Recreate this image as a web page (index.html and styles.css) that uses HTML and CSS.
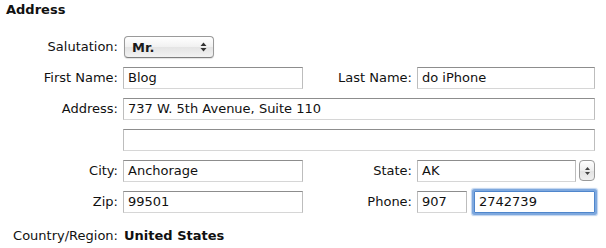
FILE: index.html
```html
<!DOCTYPE html>
<html>
<head>
  <title>Address</title>
  <meta name="viewport" content="width=device-width, initial-scale=1.0">
  <link rel="stylesheet" href="styles.css">
</head>
<body>
  <div class="panel">
    <h1>Address</h1>
    <div class="form">
      <label>Salutation:</label>
      <div class="popup">
        <span>Mr.</span>
        <svg width="7" height="10" viewBox="0 0 7 10"><path d="M3.5 0.5 L6.5 4 L0.5 4 Z M3.5 9.5 L6.5 6 L0.5 6 Z" fill="#333"/></svg>
      </div>
      <div></div>
      <div></div>

      <label>First Name:</label>
      <div class="field">Blog</div>
      <label>Last Name:</label>
      <div class="field">do iPhone</div>

      <label>Address:</label>
      <div class="field wide">737 W. 5th Avenue, Suite 110</div>

      <label></label>
      <div class="field wide"></div>

      <label>City:</label>
      <div class="field">Anchorage</div>
      <label>State:</label>
      <div class="combo">
        <div class="field">AK</div>
        <div class="stepper">
          <svg width="7" height="10" viewBox="0 0 7 10"><path d="M3.5 1 L6 4 L1 4 Z M3.5 9 L6 6 L1 6 Z" fill="#444"/></svg>
        </div>
      </div>

      <label>Zip:</label>
      <div class="field">99501</div>
      <label>Phone:</label>
      <div class="phone">
        <div class="field area">907</div>
        <div class="field focused">2742739</div>
      </div>

      <label class="country">Country/Region:</label>
      <div class="country value">United States</div>
    </div>
  </div>
</body>
</html>
```

FILE: styles.css
```css
body {
  margin: 0;
  background-color: #fff;
  font-family: "DejaVu Sans", sans-serif;
  font-size: 13px;
  color: #111;
}
.panel {
  width: 606px;
  height: 248px;
  overflow: hidden;
}
h1 {
  font-size: 13px;
  font-weight: bold;
  margin: 0;
  padding: 2px 0 0 6px;
  line-height: 16px;
  height: 18px;
}
.form {
  display: grid;
  grid-template-columns: 118px 180px 104px 178px;
  grid-auto-rows: 22px;
  column-gap: 5px;
  row-gap: 9px;
  margin-top: 16px;
}
label {
  text-align: right;
  line-height: 22px;
  white-space: nowrap;
}
.field {
  box-sizing: border-box;
  height: 22px;
  line-height: 20px;
  padding: 0 4px;
  background-color: #fff;
  border: 1px solid #bdbdbd;
  border-top-color: #8d8d8d;
  border-bottom-color: #d6d6d6;
  white-space: nowrap;
  overflow: hidden;
}
.wide {
  grid-column: 2 / 5;
}
.popup {
  box-sizing: border-box;
  width: 90px;
  height: 22px;
  margin-left: 1px;
  padding: 0 6px 0 7px;
  display: flex;
  align-items: center;
  justify-content: space-between;
  border: 1px solid #9a9a9a;
  border-bottom-color: #7e7e7e;
  border-radius: 4px;
  background: linear-gradient(#ffffff, #f1f1f1 50%, #e4e4e4 51%, #f2f2f2);
  box-shadow: 0 1px 1px rgba(0, 0, 0, 0.12);
  font-weight: bold;
  color: #1a1a1a;
}
.combo {
  display: flex;
  gap: 3px;
}
.combo .field {
  flex: 1;
}
.stepper {
  box-sizing: border-box;
  width: 16px;
  height: 21px;
  display: flex;
  align-items: center;
  justify-content: center;
  border: 1px solid #9a9a9a;
  border-radius: 4px;
  background: linear-gradient(#ffffff, #eeeeee 50%, #e2e2e2 51%, #f0f0f0);
}
.phone {
  display: flex;
  gap: 4px;
}
.area {
  width: 50px;
}
.focused {
  flex: 1;
  margin-left: 3px;
  border: 1px solid #4f86cc;
  box-shadow: 0 0 0 2px #7ea8de, 0 0 1px 3px rgba(126, 168, 222, 0.5);
  border-radius: 1px;
}
.country {
  margin-top: 3px;
  line-height: 22px;
}
.value {
  grid-column: 2 / 5;
  font-weight: bold;
  padding-left: 1px;
}
```
